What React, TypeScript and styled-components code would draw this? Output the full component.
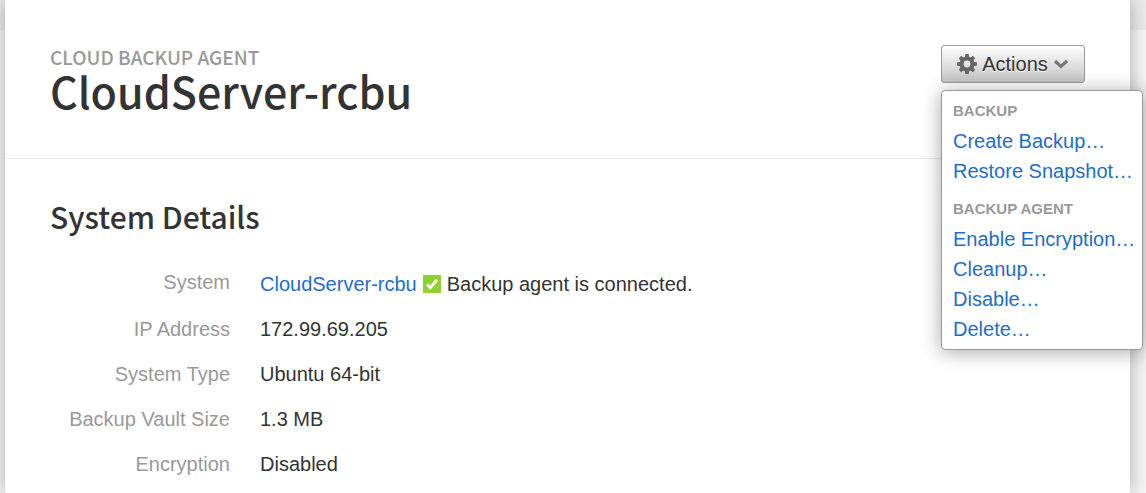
import React from "react";
import styled, { createGlobalStyle } from "styled-components";

const GlobalStyle = createGlobalStyle`
  * { box-sizing: border-box; }
  body {
    margin: 0;
    background: #f5f5f5 linear-gradient(#ebebeb, #ebebeb) top / 100% 30px no-repeat;
    color: #333;
    font: 20px/30px "Liberation Sans", Arial, sans-serif;
  }
  #root { overflow: hidden; }
`;

const headingFont = `"Noto Sans CJK SC", "Noto Sans", sans-serif`;

const Panel = styled.main`
  min-height: 100vh;
  margin: 0 16px 0 5px;
  background: #fff;
  box-shadow: 0 0 18px rgba(0, 0, 0, 0.3);
`;

const Header = styled.header`
  display: flex;
  justify-content: space-between;
  align-items: flex-start;
  padding: 45px 45px 47px;
  border-bottom: 1px solid #ebebeb;
`;

const TitleGroup = styled.div`
  font-family: ${headingFont};
  font-weight: 500;
`;

const Eyebrow = styled.p`
  margin: 0;
  color: #999;
  font-size: 19px;
  line-height: 24px;
  text-transform: uppercase;
`;

const Title = styled.h1`
  margin: 0;
  font-size: 43px;
  font-weight: 500;
  line-height: 42px;
`;

const ActionsWrap = styled.div`
  position: relative;
`;

const ActionsButton = styled.button`
  display: flex;
  align-items: center;
  justify-content: center;
  gap: 5px;
  width: 144px;
  height: 38px;
  padding: 0;
  border: 1px solid #999;
  border-radius: 3px;
  background: linear-gradient(#fff, #c4c4c4);
  color: #333;
  font: inherit;
  text-shadow: 0 1px 0 #fff;
`;

const Menu = styled.div`
  position: absolute;
  top: 45px;
  left: 0;
  width: 202px;
  padding: 5px 11px;
  border: 1px solid #999;
  border-radius: 4px;
  background: #fff;
  box-shadow: 0 2px 20px rgba(0, 0, 0, 0.35);
  white-space: nowrap;
`;

const MenuHeading = styled.h3`
  margin: 0;
  color: #999;
  font-size: 15px;
  line-height: 30px;
  text-transform: uppercase;
`;

const MenuList = styled.ul`
  margin: 0;
  padding: 0;
  list-style: none;

  & + ${MenuHeading} {
    margin-top: 8px;
  }
`;

const Link = styled.a`
  color: #1f6dc6;
  text-decoration: none;
`;

const Details = styled.section`
  padding: 35px 45px 8px;
`;

const SectionTitle = styled.h2`
  margin: 0 0 29px;
  font-family: ${headingFont};
  font-size: 30px;
  font-weight: 500;
  line-height: 44px;
`;

const DetailList = styled.dl`
  display: grid;
  gap: 15px;
  margin: 0;
`;

const DetailRow = styled.div`
  display: grid;
  grid-template-columns: 180px 1fr;
  column-gap: 30px;
  align-items: start;
`;

const Label = styled.dt`
  color: #999;
  text-align: right;
`;

const Value = styled.dd`
  margin: 0;
`;

const StatusValue = styled(Value)`
  display: flex;
  align-items: center;
  gap: 6px;
  padding-top: 2px;
`;

const GearIcon = () => (
  <svg width="20" height="20" viewBox="0 0 20 20" aria-hidden="true">
    <circle cx="10" cy="10" r="5.4" fill="none" stroke="#666" strokeWidth="4" />
    <g fill="#666">
      {[0, 45, 90, 135, 180, 225, 270, 315].map((angle) => (
        <path key={angle} d="M7.8 4 8.3.1h3.4L12.2 4z" transform={`rotate(${angle} 10 10)`} />
      ))}
    </g>
  </svg>
);

const ChevronIcon = () => (
  <svg width="16" height="12" viewBox="0 0 16 12" aria-hidden="true">
    <path d="M2 3 8 8.4 14 3" fill="none" stroke="#777" strokeWidth="3.2" />
  </svg>
);

const CheckIcon = () => (
  <svg width="18" height="18" viewBox="0 0 18 18" role="img" aria-label="Connected">
    <path d="M0 0h18v18H0z" fill="#8fd12f" />
    <path d="m4 9.2 3.3 3.6L14 4.8" fill="none" stroke="#fff" strokeWidth="3" />
  </svg>
);

const menuGroups = [
  { title: "Backup", items: ["Create Backup…", "Restore Snapshot…"] },
  { title: "Backup Agent", items: ["Enable Encryption…", "Cleanup…", "Disable…", "Delete…"] },
];

const details = [
  ["IP Address", "172.99.69.205"],
  ["System Type", "Ubuntu 64-bit"],
  ["Backup Vault Size", "1.3 MB"],
  ["Encryption", "Disabled"],
];

export default function App() {
  return (
    <>
      <GlobalStyle />
      <Panel>
        <Header>
          <TitleGroup>
            <Eyebrow>Cloud Backup Agent</Eyebrow>
            <Title>CloudServer-rcbu</Title>
          </TitleGroup>
          <ActionsWrap>
            <ActionsButton type="button" aria-expanded="true">
              <GearIcon />
              Actions
              <ChevronIcon />
            </ActionsButton>
            <Menu>
              {menuGroups.map((group) => (
                <React.Fragment key={group.title}>
                  <MenuHeading>{group.title}</MenuHeading>
                  <MenuList>
                    {group.items.map((item) => (
                      <li key={item}>
                        <Link href="#">{item}</Link>
                      </li>
                    ))}
                  </MenuList>
                </React.Fragment>
              ))}
            </Menu>
          </ActionsWrap>
        </Header>
        <Details>
          <SectionTitle>System Details</SectionTitle>
          <DetailList>
            <DetailRow>
              <Label>System</Label>
              <StatusValue>
                <Link href="#">CloudServer-rcbu</Link>
                <CheckIcon />
                Backup agent is connected.
              </StatusValue>
            </DetailRow>
            {details.map(([label, value]) => (
              <DetailRow key={label}>
                <Label>{label}</Label>
                <Value>{value}</Value>
              </DetailRow>
            ))}
          </DetailList>
        </Details>
      </Panel>
    </>
  );
}
